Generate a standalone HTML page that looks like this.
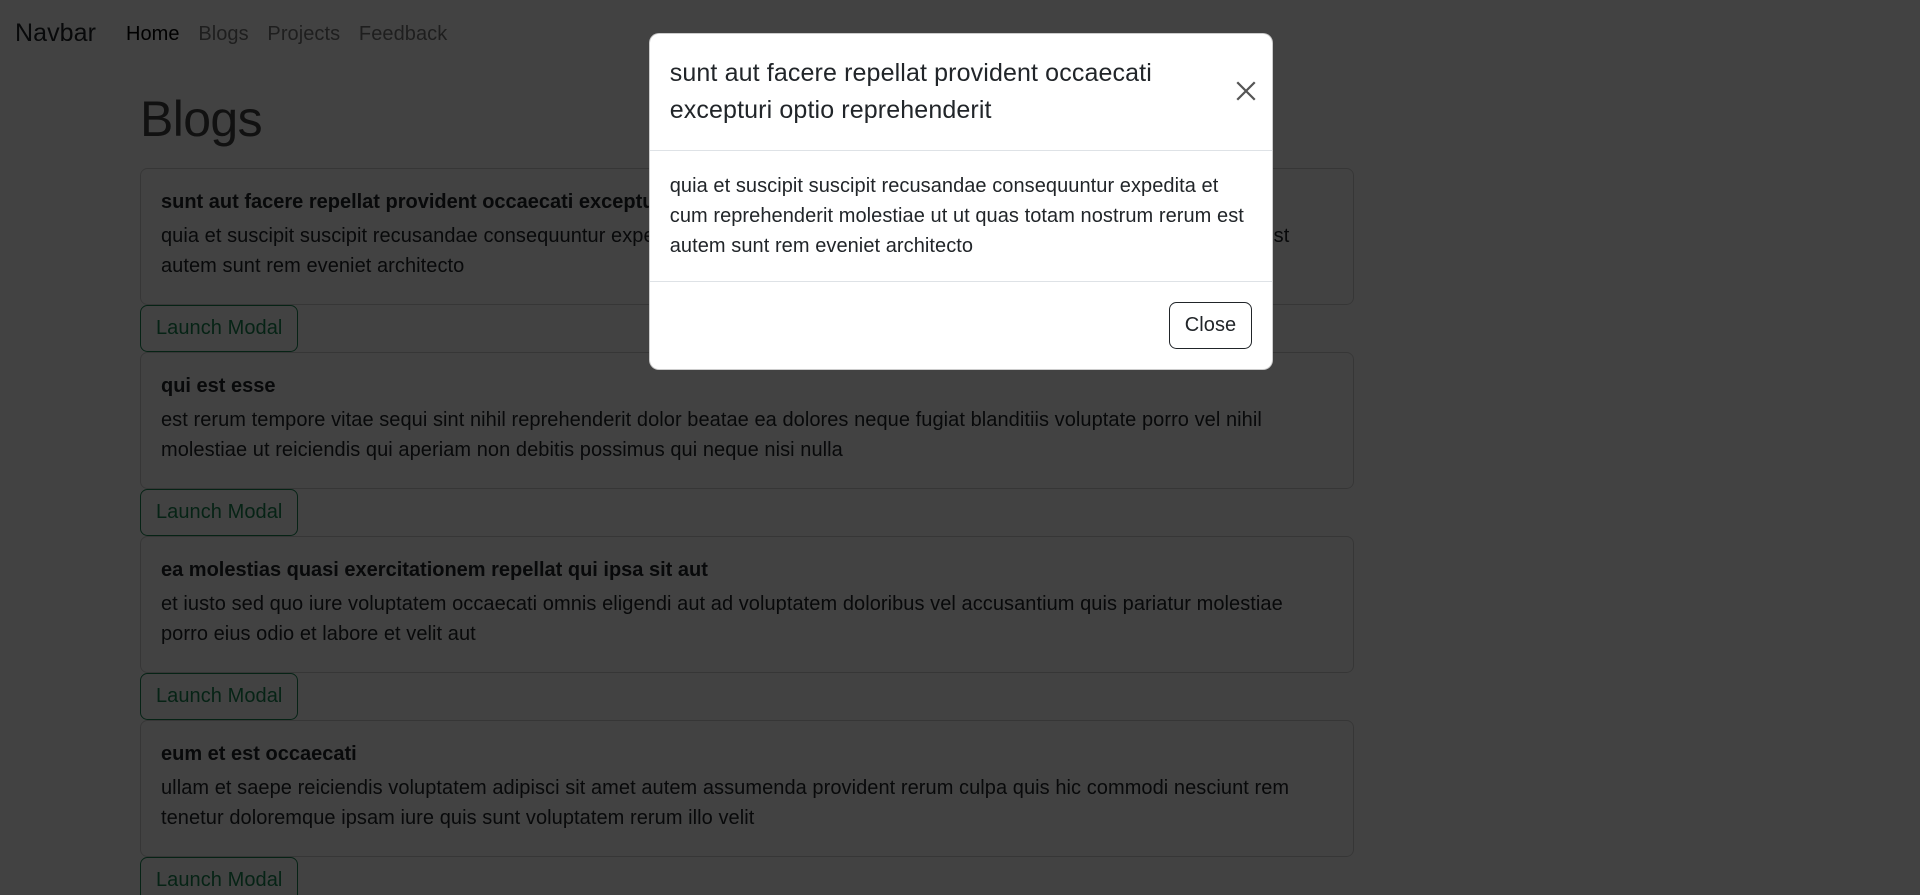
<!DOCTYPE html>
<html><head><meta charset="utf-8"><style>
html{zoom:1.25;background:#fff;overflow:hidden;height:716px}
body{margin:0;font-family:"Liberation Sans",sans-serif;font-size:16px;line-height:1.5;color:#212529;background:#fff;overflow:hidden;height:716px;letter-spacing:0.05px}
.nav{height:56px;display:flex;align-items:center;padding:0 12px;position:relative;top:-1px}
.brand{font-size:20px;margin-right:24px}
.nav a{margin-right:15px;color:rgba(0,0,0,.55);text-decoration:none}
.nav a.act{color:#000}
.wrap{margin-left:112px;width:971px}
h1{font-size:40px;font-weight:300;margin:15px 0 15px;line-height:1.2;color:#444;letter-spacing:-0.5px}
.card{border:1px solid rgba(0,0,0,.175);border-radius:6px;padding:17px 16px 16px;height:75px;white-space:nowrap}
.card b{display:block;font-weight:bold;margin-bottom:6px;line-height:1.2;letter-spacing:0}
.btn{display:inline-block;border:1px solid #198754;color:#198754;border-radius:6px;padding:6px 12px;height:24px}
.ov{position:fixed;left:0;top:0;width:100vw;height:100vh;background:rgba(0,0,0,.74)}
.modal{position:fixed;left:519px;top:26px;width:498px;background:#fff;border-radius:8px;border:1px solid rgba(0,0,0,.2)}
.mh{padding:17px 16px 16px;border-bottom:1px solid #dee2e6;position:relative}
.mh div{font-size:20px;font-weight:500;line-height:1.5;white-space:nowrap;letter-spacing:0.1px}
.x{position:absolute;right:13px;top:38px}
.mb{padding:16px;border-bottom:1px solid #dee2e6;white-space:nowrap}
.mf{padding:16px;text-align:right;height:38px}
.cb{display:inline-block;border:1px solid #212529;border-radius:6px;padding:6px 12px;height:24px}
</style></head><body>
<div class="nav"><span class="brand">Navbar</span><a class="act">Home</a><a>Blogs</a><a>Projects</a><a>Feedback</a></div>
<div class="wrap">
<h1>Blogs</h1>
<div class="card"><b>sunt aut facere repellat provident occaecati excepturi optio reprehenderit</b>quia et suscipit suscipit recusandae consequuntur expedita et cum reprehenderit molestiae ut ut quas totam nostrum rerum est<br>autem sunt rem eveniet architecto</div>
<span class="btn">Launch Modal</span>
<div class="card"><b>qui est esse</b>est rerum tempore vitae sequi sint nihil reprehenderit dolor beatae ea dolores neque fugiat blanditiis voluptate porro vel nihil<br>molestiae ut reiciendis qui aperiam non debitis possimus qui neque nisi nulla</div>
<span class="btn">Launch Modal</span>
<div class="card"><b>ea molestias quasi exercitationem repellat qui ipsa sit aut</b>et iusto sed quo iure voluptatem occaecati omnis eligendi aut ad voluptatem doloribus vel accusantium quis pariatur molestiae<br>porro eius odio et labore et velit aut</div>
<span class="btn">Launch Modal</span>
<div class="card"><b>eum et est occaecati</b>ullam et saepe reiciendis voluptatem adipisci sit amet autem assumenda provident rerum culpa quis hic commodi nesciunt rem<br>tenetur doloremque ipsam iure quis sunt voluptatem rerum illo velit</div>
<span class="btn">Launch Modal</span>
</div>
<div class="ov"></div>
<div class="modal">
<div class="mh"><div>sunt aut facere repellat provident occaecati<br>excepturi optio reprehenderit</div>
<svg class="x" width="16" height="16" viewBox="0 0 16 16"><path d="M1 1L15 15M15 1L1 15" stroke="#555" stroke-width="1.8"/></svg></div>
<div class="mb">quia et suscipit suscipit recusandae consequuntur expedita et<br>cum reprehenderit molestiae ut ut quas totam nostrum rerum est<br>autem sunt rem eveniet architecto</div>
<div class="mf"><span class="cb">Close</span></div>
</div>
</body></html>
